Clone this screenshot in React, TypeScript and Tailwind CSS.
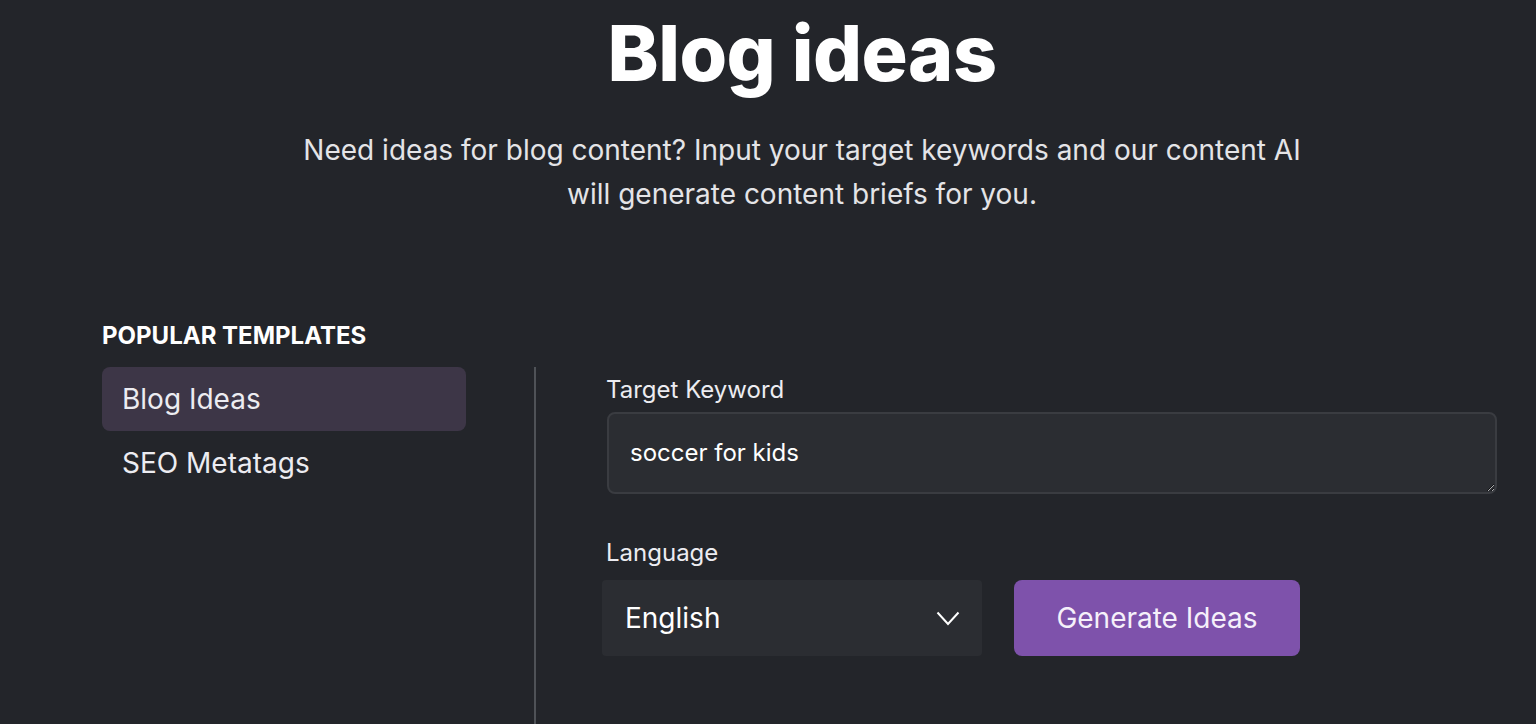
const templates = ["Blog Ideas", "SEO Metatags"];

const App = () => {
  return (
    <div
      className="min-h-screen bg-[#23252a] text-white"
      style={{ fontFamily: "Inter, 'Noto Sans', sans-serif" }}
    >
      <header className="flex flex-col items-center pl-[68px] pt-[8px]">
        <h1 className="text-[77px] font-extrabold leading-[90px] tracking-[-0.5px]">
          Blog ideas
        </h1>
        <p className="mt-[30px] text-center text-[28px] leading-[44px] text-[#e4e4e7]">
          Need ideas for blog content? Input your target keywords and our content AI
          <br />
          will generate content briefs for you.
        </p>
      </header>

      <div className="mt-[105px] px-[102px]">
        <h2 className="text-[24px] font-bold uppercase leading-[30px]">Popular Templates</h2>
        <div className="mt-[16px] flex">
          <ul className="w-[364px] shrink-0">
            {templates.map((t, i) => (
              <li
                key={t}
                className={
                  i === 0
                    ? "flex h-[64px] items-center rounded-lg bg-[#3d3647] px-[20px] text-[28px] text-[#ececf1]"
                    : "flex h-[64px] items-center rounded-lg px-[20px] text-[28px] text-[#ececf1]"
                }
              >
                {t}
              </li>
            ))}
          </ul>

          <div className="ml-[68px] h-[357px] w-[2px] shrink-0 bg-[#4f5257]" />

          <div className="flex-1 pl-[70px] pt-[8px]">
            <label className="block text-[24px] leading-[30px] text-[#ececf1]">Target Keyword</label>
            <textarea
              defaultValue="soccer for kids"
              className="mt-[7px] ml-[1px] block h-[82px] w-[890px] rounded-lg border-2 border-[#3a3c41] bg-[#2b2d32] px-[21px] py-[24px] text-[24px] leading-[30px] text-white outline-none"
            />

            <label className="mt-[44px] block text-[24px] leading-[30px] text-[#ececf1]">Language</label>
            <div className="mt-[12px] flex gap-[32px]">
              <div className="-ml-[4px] flex h-[76px] w-[380px] items-center justify-between rounded bg-[#2b2d32] pl-[23px] pr-[22px]">
                <span className="text-[28px]">English</span>
                <svg width="24" height="15" viewBox="0 0 24 15" fill="none">
                  <path d="M1.5 1.5 L12 13 L22.5 1.5" stroke="white" strokeWidth="2" />
                </svg>
              </div>
              <button className="h-[76px] w-[286px] rounded-lg bg-[#7e52ab] text-[28px] text-[#f5f0fa]">
                Generate Ideas
              </button>
            </div>
          </div>
        </div>
      </div>
    </div>
  );
};

export default App;
